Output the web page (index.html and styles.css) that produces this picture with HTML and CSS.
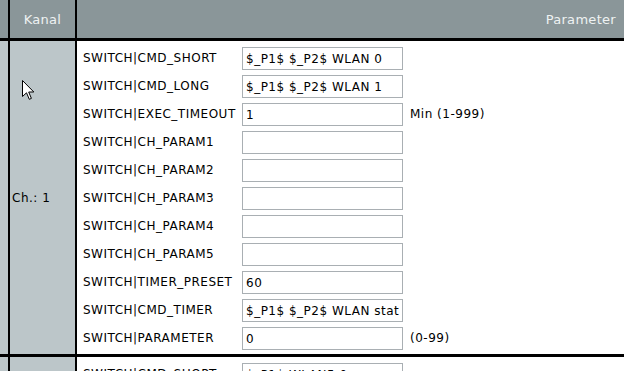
FILE: index.html
```html
<!DOCTYPE html>
<html lang="de">
<head>
    <meta charset="UTF-8">
    <meta name="viewport" content="width=device-width, initial-scale=1.0">
    <title>Kanalparameter</title>
    <link rel="stylesheet" href="styles.css">
</head>
<body>
    <table class="kanaele">
        <thead>
            <tr>
                <th class="rand"></th>
                <th class="kanal">Kanal</th>
                <th class="param">Parameter</th>
            </tr>
        </thead>
        <tbody>
            <!-- Kanal 1 -->
            <tr>
                <td class="rand"></td>
                <td class="kanal">Ch.: 1</td>
                <td class="param">
                    <table class="werte">
                        <tr><td class="name">SWITCH|CMD_SHORT</td><td><input type="text" value="$_P1$ $_P2$ WLAN 0"></td><td></td></tr>
                        <tr><td class="name">SWITCH|CMD_LONG</td><td><input type="text" value="$_P1$ $_P2$ WLAN 1"></td><td></td></tr>
                        <tr><td class="name">SWITCH|EXEC_TIMEOUT</td><td><input type="text" value="1"></td><td class="hinweis">Min (1-999)</td></tr>
                        <tr><td class="name">SWITCH|CH_PARAM1</td><td><input type="text" value=""></td><td></td></tr>
                        <tr><td class="name">SWITCH|CH_PARAM2</td><td><input type="text" value=""></td><td></td></tr>
                        <tr><td class="name">SWITCH|CH_PARAM3</td><td><input type="text" value=""></td><td></td></tr>
                        <tr><td class="name">SWITCH|CH_PARAM4</td><td><input type="text" value=""></td><td></td></tr>
                        <tr><td class="name">SWITCH|CH_PARAM5</td><td><input type="text" value=""></td><td></td></tr>
                        <tr><td class="name">SWITCH|TIMER_PRESET</td><td><input type="text" value="60"></td><td></td></tr>
                        <tr><td class="name">SWITCH|CMD_TIMER</td><td><input type="text" value="$_P1$ $_P2$ WLAN status"></td><td></td></tr>
                        <tr><td class="name">SWITCH|PARAMETER</td><td><input type="text" value="0"></td><td class="hinweis">(0-99)</td></tr>
                    </table>
                </td>
            </tr>
            <!-- Kanal 2 -->
            <tr>
                <td class="rand"></td>
                <td class="kanal">Ch.: 2</td>
                <td class="param">
                    <table class="werte">
                        <tr><td class="name">SWITCH|CMD_SHORT</td><td><input type="text" value="$_P1$ WLAN5 0"></td><td></td></tr>
                        <tr><td class="name">SWITCH|CMD_LONG</td><td><input type="text" value="$_P1$ WLAN5 1"></td><td></td></tr>
                        <tr><td class="name">SWITCH|EXEC_TIMEOUT</td><td><input type="text" value="1"></td><td class="hinweis">Min (1-999)</td></tr>
                        <tr><td class="name">SWITCH|CH_PARAM1</td><td><input type="text" value=""></td><td></td></tr>
                        <tr><td class="name">SWITCH|CH_PARAM2</td><td><input type="text" value=""></td><td></td></tr>
                        <tr><td class="name">SWITCH|CH_PARAM3</td><td><input type="text" value=""></td><td></td></tr>
                        <tr><td class="name">SWITCH|CH_PARAM4</td><td><input type="text" value=""></td><td></td></tr>
                        <tr><td class="name">SWITCH|CH_PARAM5</td><td><input type="text" value=""></td><td></td></tr>
                        <tr><td class="name">SWITCH|TIMER_PRESET</td><td><input type="text" value="60"></td><td></td></tr>
                        <tr><td class="name">SWITCH|CMD_TIMER</td><td><input type="text" value="$_P1$ WLAN5 status"></td><td></td></tr>
                        <tr><td class="name">SWITCH|PARAMETER</td><td><input type="text" value="0"></td><td class="hinweis">(0-99)</td></tr>
                    </table>
                </td>
            </tr>
        </tbody>
    </table>

    <!-- Mauszeiger -->
    <svg class="zeiger" width="13" height="21" viewBox="0 0 13 21">
        <path d="M0.5 0.5 L0.5 16.5 L4.5 12.8 L7.3 19.3 L9.4 18.4 L6.7 12 L11.8 12 Z" fill="#fff" stroke="#000" stroke-width="1" stroke-linejoin="round"/>
    </svg>
</body>
</html>
```

FILE: styles.css
```css
body {
    margin: 0;
    overflow: hidden;
    height: 371px;
    background-color: #fff;
    font-family: "DejaVu Sans", Tahoma, sans-serif;
    font-size: 12px;
    letter-spacing: 0.5px;
    color: #000;
}
.kanaele {
    border-collapse: collapse;
    width: 624px;
    table-layout: fixed;
}
.kanaele > thead > tr > th {
    background: #8a9699;
    color: #eef2f2;
    font-weight: normal;
    font-size: 13px;
    letter-spacing: 0.3px;
    height: 38px;
    padding: 0 8px;
    border-bottom: 3px solid #000;
}
.kanaele > tbody > tr > td {
    border-bottom: 3px solid #000;
    vertical-align: middle;
}
.kanaele .rand {
    width: 8px;
    padding: 0;
    background: #bcc6c9;
    border-right: 2px solid #000;
}
.kanaele th.rand {
    background: #8a9699;
}
.kanaele .kanal {
    width: 65px;
    border-right: 2px solid #000;
}
.kanaele th.kanal {
    text-align: center;
    padding: 0;
}
.kanaele td.kanal {
    background: #bcc6c9;
    padding: 0 0 0 2px;
}
.kanaele th.param {
    text-align: right;
}
.kanaele td.param {
    padding: 3px 0 2px 6px;
}
.werte {
    border-collapse: collapse;
}
.werte td {
    height: 28px;
    padding: 0;
    white-space: nowrap;
}
.werte .name {
    width: 159px;
}
.werte input {
    display: block;
    box-sizing: border-box;
    width: 161px;
    height: 23px;
    margin: 0;
    padding: 2px 3px 0;
    border: 1px solid #a9afb3;
    font-family: "DejaVu Sans", Tahoma, sans-serif;
    font-size: 12px;
    letter-spacing: 0.5px;
    color: #000;
}
.werte .hinweis {
    padding-left: 7px;
}
.zeiger {
    position: absolute;
    left: 22px;
    top: 80px;
}
```
